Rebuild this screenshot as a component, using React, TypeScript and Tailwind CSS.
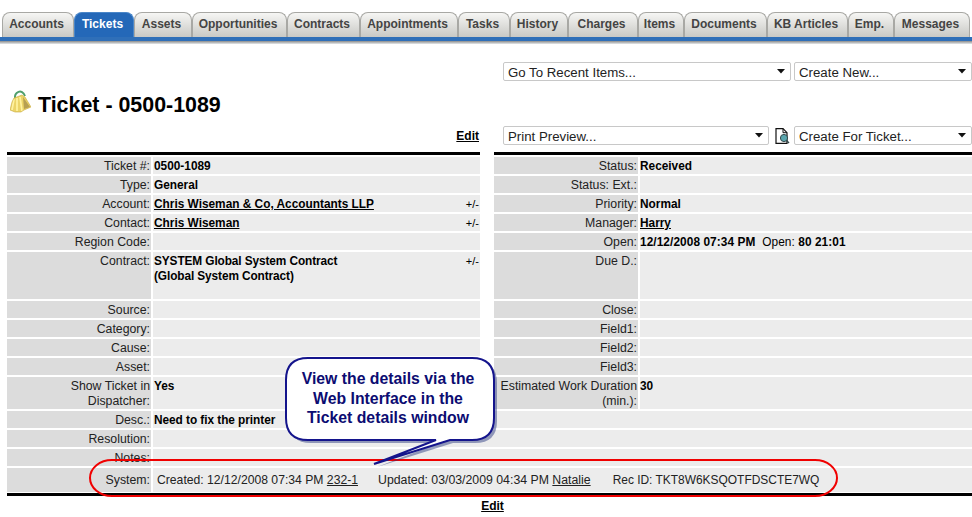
const tabs: [string, number][] = [
  ["Accounts", 72], ["Tickets", 60], ["Assets", 58], ["Opportunities", 95], ["Contracts", 73], ["Appointments", 98],
  ["Tasks", 52], ["History", 58], ["Charges", 70], ["Items", 46], ["Documents", 83], ["KB Articles", 81], ["Emp.", 46], ["Messages", 76],
];

function Tab({ label, width }: { label: string; width: number }) {
  const active = label === "Tickets";
  return (
    <div
      style={{ width }}
      className={
        "h-[25px] shrink-0 flex items-center justify-center pr-[3px] pb-[3px] rounded-t-[8px] text-[12px] font-bold " +
        (active
          ? "bg-[#2468b8] text-white border border-b-0 border-[#4a86c8]"
          : "bg-gradient-to-b from-[#f6f6f4] to-[#c9c9c5] text-[#444444] border border-b-0 border-[#a8a8a4]")
      }
    >
      {label}
    </div>
  );
}

function Select({ label, width }: { label: string; width: number }) {
  return (
    <div style={{ width }} className="h-[19px] shrink-0 flex items-center justify-between pl-[4px] pr-[2px] border border-[#c8c8c8] rounded-[2px] bg-white text-[13.25px] text-[#222222]">
      <span className="pt-[2px]">{label}</span>
      <svg width="9" height="5" viewBox="0 0 9 5" className="mr-[2px]"><path d="M0 0h8L4 4.5z" fill="#111" /></svg>
    </div>
  );
}

function Row({ label, children, h = 17, right, flush, size = "" }: { label: React.ReactNode; children?: React.ReactNode; h?: number; right?: string; flush?: boolean; size?: string }) {
  return (
    <div style={{ height: h }} className="flex gap-[2px]">
      <div className="w-[144px] shrink-0 bg-[#dcdcdc] text-right pr-px text-[12.3px] leading-[15px] pt-[2px] text-[#222222] whitespace-nowrap">{label}</div>
      <div className={"flex-1 min-w-0 bg-[#ececec] flex justify-between pt-[2px] text-[11.85px] leading-[15px] font-bold text-black " + size + " " + (flush ? "pl-0" : "pl-px")}>
        <div>{children}</div>
        {right && <span className="font-normal tracking-normal pr-[1px] text-[11px]">{right}</span>}
      </div>
    </div>
  );
}

function A({ children }: { children: React.ReactNode }) {
  return <span className="underline">{children}</span>;
}

export default function App() {
  return (
    <div className="relative w-[972px] h-[517px] overflow-hidden bg-white font-['Liberation_Sans',Arial,sans-serif]">
      <div className="pt-[12px]">
        <div className="flex pl-[2px] h-[25px]">
          {tabs.map(([t, w]) => <Tab key={t} label={t} width={w} />)}
        </div>
        <div className="h-[4px] bg-[#2f6fb8]" />
        <div className="h-[3px] bg-gradient-to-b from-[#8c8c8c] to-[#e4e8ea]" />
      </div>

      <div className="flex justify-end gap-[3px] mt-[18px]">
        <Select label="Go To Recent Items..." width={288} />
        <Select label="Create New..." width={178} />
      </div>

      <div className="flex items-center gap-[7px] pl-[10px] mt-[8px] h-[30px]">
        <svg width="21" height="23" viewBox="0 0 21 23" className="-mt-[5px] shrink-0">
          <path d="M5 9 C4 2 12 -2 15 6" fill="none" stroke="#4f9f6c" strokeWidth="2" />
          <path d="M4 8 L12 5 L15 7 L21 17 L14 20 L11 22 L5 22 L0 20 L2 12 Z" fill="#ecd468" />
          <path d="M4 9 L2 20 M7 8 L7 21 M10 7 L12 21" stroke="#fff2a0" strokeWidth="1.7" fill="none" />
          <path d="M4 8 L12 5 L15 7 L21 17 L14 20 L11 22 L5 22 L0 20 L2 12 Z" fill="none" stroke="#c7a93e" strokeWidth=".6" />
          <path d="M13 7 L20 17 L14 19 Z" fill="#b7a052" />
        </svg>
        <div className="text-[21.4px] font-bold leading-none text-black pt-[4px]">Ticket - 0500-1089</div>
      </div>

      <div className="flex mt-[7px] h-[19px]">
        <div className="w-[479px] text-right text-[12px] font-bold underline leading-[20px] shrink-0">Edit</div>
        <div className="ml-[24px]"><Select label="Print Preview..." width={266} /></div>
        <svg width="15" height="16" viewBox="0 0 15 16" className="ml-[6px] mt-[2px] shrink-0">
          <path d="M1 .7h7l4 4v10.6H1z" fill="#fff" stroke="#111" strokeWidth="1.2" />
          <path d="M8 .7v4h4" fill="none" stroke="#111" />
          <circle cx="9" cy="10" r="3.6" fill="#5aa6ae" stroke="#33474a" />
          <path d="M11.5 12.5l2.5 2.5" stroke="#33474a" strokeWidth="1.5" />
        </svg>
        <div className="ml-[4px]"><Select label="Create For Ticket..." width={178} /></div>
      </div>

      <div className="ml-[7px] mt-[7px]">
        <div className="flex gap-[14px]">
          <div className="w-[473px] flex flex-col gap-[2px] border-t-[3px] border-black pt-[2px]">
            <Row label="Ticket #:">0500-1089</Row>
            <Row label="Type:">General</Row>
            <Row label="Account:" right="+/-"><A>Chris Wiseman &amp; Co, Accountants LLP</A></Row>
            <Row label="Contact:" right="+/-"><A>Chris Wiseman</A></Row>
            <Row label="Region Code:" />
            <Row label="Contract:" h={47} right="+/-" size="tracking-[-0.1px]">SYSTEM Global System Contract<br />(Global System Contract)</Row>
            <Row label="Source:" />
            <Row label="Category:" />
            <Row label="Cause:" />
            <Row label="Asset:" />
            <Row label={<>Show Ticket in<br />Dispatcher:</>} h={32}>Yes</Row>
          </div>
          <div className="flex-1 flex flex-col gap-[2px] border-t-[3px] border-black pt-[2px]">
            <Row flush label="Status:">Received</Row>
            <Row flush label="Status: Ext.:" />
            <Row flush label="Priority:">Normal</Row>
            <Row flush label="Manager:"><A>Harry</A></Row>
            <Row flush label="Open:" size="tracking-[0.08px]">12/12/2008 07:34 PM&nbsp; <span className="font-normal">Open:</span> 80 21:01</Row>
            <Row flush label="Due D.:" h={47} />
            <Row flush label="Close:" />
            <Row flush label="Field1:" />
            <Row flush label="Field2:" />
            <Row flush label="Field3:" />
            <Row flush label={<>Estimated Work Duration<br />(min.):</>} h={32}>30</Row>
          </div>
        </div>
        <div className="flex flex-col gap-[2px] mt-[2px]">
          <Row label="Desc.:" size="tracking-[-0.05px]">Need to fix the printer</Row>
          <Row label="Resolution:" />
          <Row label="Notes:" />
          <div className="h-[24px] flex gap-[2px] text-[12.3px] text-[#222222]">
            <div className="w-[144px] bg-[#dcdcdc] text-right pr-px pt-[4px] leading-[16px]">System:</div>
            <div className="flex-1 bg-[#ececec] pl-[4px] pt-[4px] leading-[16px] whitespace-pre">
              <span className="text-[12.18px]">Created: 12/12/2008 07:34 PM <A>232-1</A></span>
              <span className="ml-[20px]">Updated: 03/03/2009 04:34 PM <A>Natalie</A></span>
              <span className="ml-[22px] text-[11.95px]">Rec ID: TKT8W6KSQOTFDSCTE7WQ</span>
            </div>
          </div>
        </div>
        <div className="h-[3px] bg-black mt-px" />
        <div className="text-center text-[12px] font-bold underline mt-px w-[971px]">Edit</div>
      </div>

      <svg width="972" height="517" className="absolute inset-0 pointer-events-none">
        <rect x="90" y="460" width="747" height="36" rx="22" ry="18" fill="none" stroke="#f00000" strokeWidth="2" />
        <path d="M308 358 H472 Q494 358 494 380 V418 Q494 440 472 440 H450 L374 464 L436 440 H308 Q286 440 286 418 V380 Q286 358 308 358 Z" fill="#1f2f7a" transform="translate(3 3)" opacity=".45" />
        <path d="M308 358 H472 Q494 358 494 380 V418 Q494 440 472 440 H450 L374 464 L436 440 H308 Q286 440 286 418 V380 Q286 358 308 358 Z" fill="#fff" stroke="#14148c" strokeWidth="2" />
      </svg>
      <div className="absolute left-[286px] top-[369px] w-[204px] text-center text-[15.8px] leading-[19.5px] font-bold text-[#0c0c72]">
        View the details via the<br />Web Interface in the<br />Ticket details window
      </div>
    </div>
  );
}
